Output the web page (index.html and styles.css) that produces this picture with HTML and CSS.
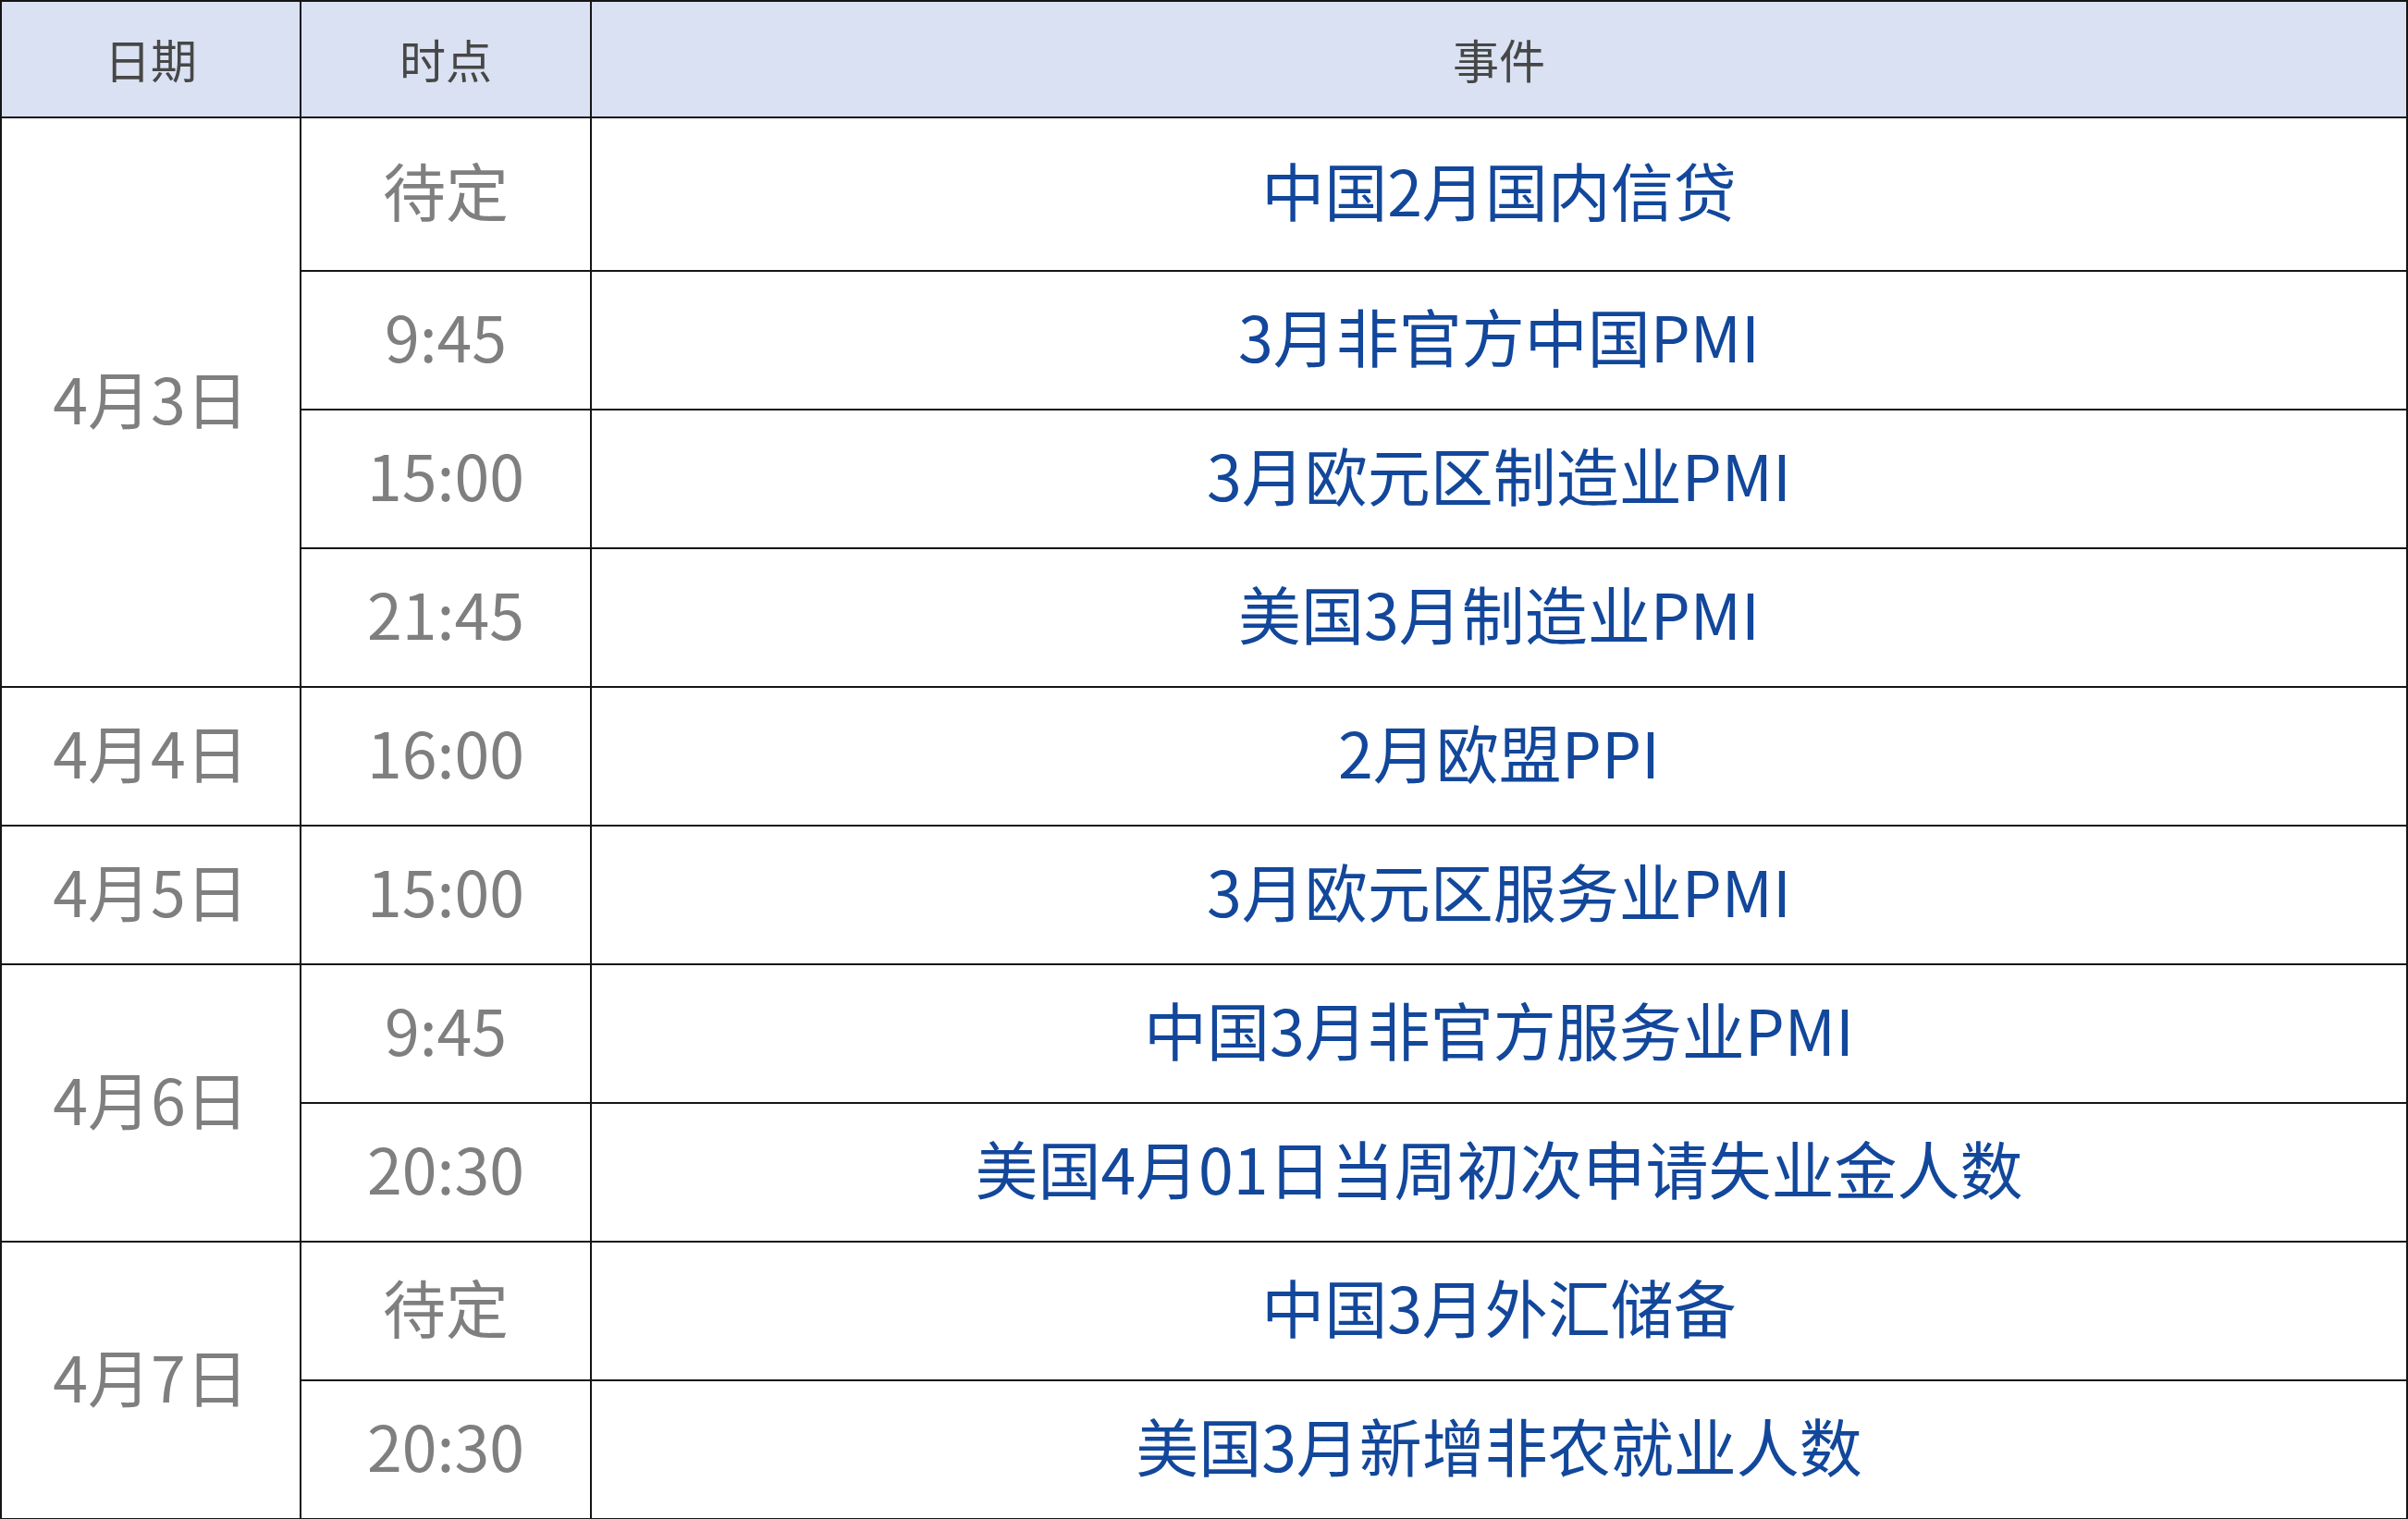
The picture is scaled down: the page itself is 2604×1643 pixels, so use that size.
FILE: index.html
```html
<!DOCTYPE html>
<html lang="zh-CN">
<head>
<meta charset="utf-8">
<title>日程</title>
<link rel="stylesheet" href="styles.css">
</head>
<body>
<table class="sched">
  <colgroup>
    <col class="c-date">
    <col class="c-time">
    <col class="c-event">
  </colgroup>
  <thead>
    <tr class="head">
      <th>日期</th>
      <th>时点</th>
      <th>事件</th>
    </tr>
  </thead>
  <tbody>
    <tr class="first">
      <td class="date" rowspan="4">4月3日</td>
      <td class="time">待定</td>
      <td class="event">中国2月国内信贷</td>
    </tr>
    <tr>
      <td class="time">9:45</td>
      <td class="event">3月非官方中国PMI</td>
    </tr>
    <tr>
      <td class="time">15:00</td>
      <td class="event">3月欧元区制造业PMI</td>
    </tr>
    <tr>
      <td class="time">21:45</td>
      <td class="event">美国3月制造业PMI</td>
    </tr>
    <tr>
      <td class="date">4月4日</td>
      <td class="time">16:00</td>
      <td class="event">2月欧盟PPI</td>
    </tr>
    <tr>
      <td class="date">4月5日</td>
      <td class="time">15:00</td>
      <td class="event">3月欧元区服务业PMI</td>
    </tr>
    <tr>
      <td class="date" rowspan="2">4月6日</td>
      <td class="time">9:45</td>
      <td class="event">中国3月非官方服务业PMI</td>
    </tr>
    <tr>
      <td class="time">20:30</td>
      <td class="event">美国4月01日当周初次申请失业金人数</td>
    </tr>
    <tr>
      <td class="date" rowspan="2">4月7日</td>
      <td class="time">待定</td>
      <td class="event">中国3月外汇储备</td>
    </tr>
    <tr>
      <td class="time">20:30</td>
      <td class="event">美国3月新增非农就业人数</td>
    </tr>
  </tbody>
</table>
</body>
</html>
```

FILE: styles.css
```css
html, body {
  margin: 0;
  padding: 0;
  background: #ffffff;
}

.sched {
  width: 2604px;
  table-layout: fixed;
  border-collapse: collapse;
  font-family: "Noto Sans CJK SC", "Noto Sans", sans-serif;
}

.c-date { width: 324px; }
.c-time { width: 314px; }

.sched th,
.sched td {
  border: 2px solid #151515;
  text-align: center;
  vertical-align: middle;
  padding: 0;
  white-space: nowrap;
}

.sched tr.head {
  height: 126px;
}

.head th {
  padding-bottom: 2px;
  background: #d9e1f2;
  color: #474747;
  font-size: 50px;
  font-weight: 400;
}

.sched tbody tr {
  height: 150px;
}

.sched tbody tr.first {
  height: 166px;
}

.sched tbody td {
  padding-bottom: 12px;
}

.date,
.time {
  color: #7f7f7f;
  font-size: 68px;
  font-weight: 400;
}

.event {
  color: #12479b;
  font-size: 68px;
  font-weight: 400;
}
```
